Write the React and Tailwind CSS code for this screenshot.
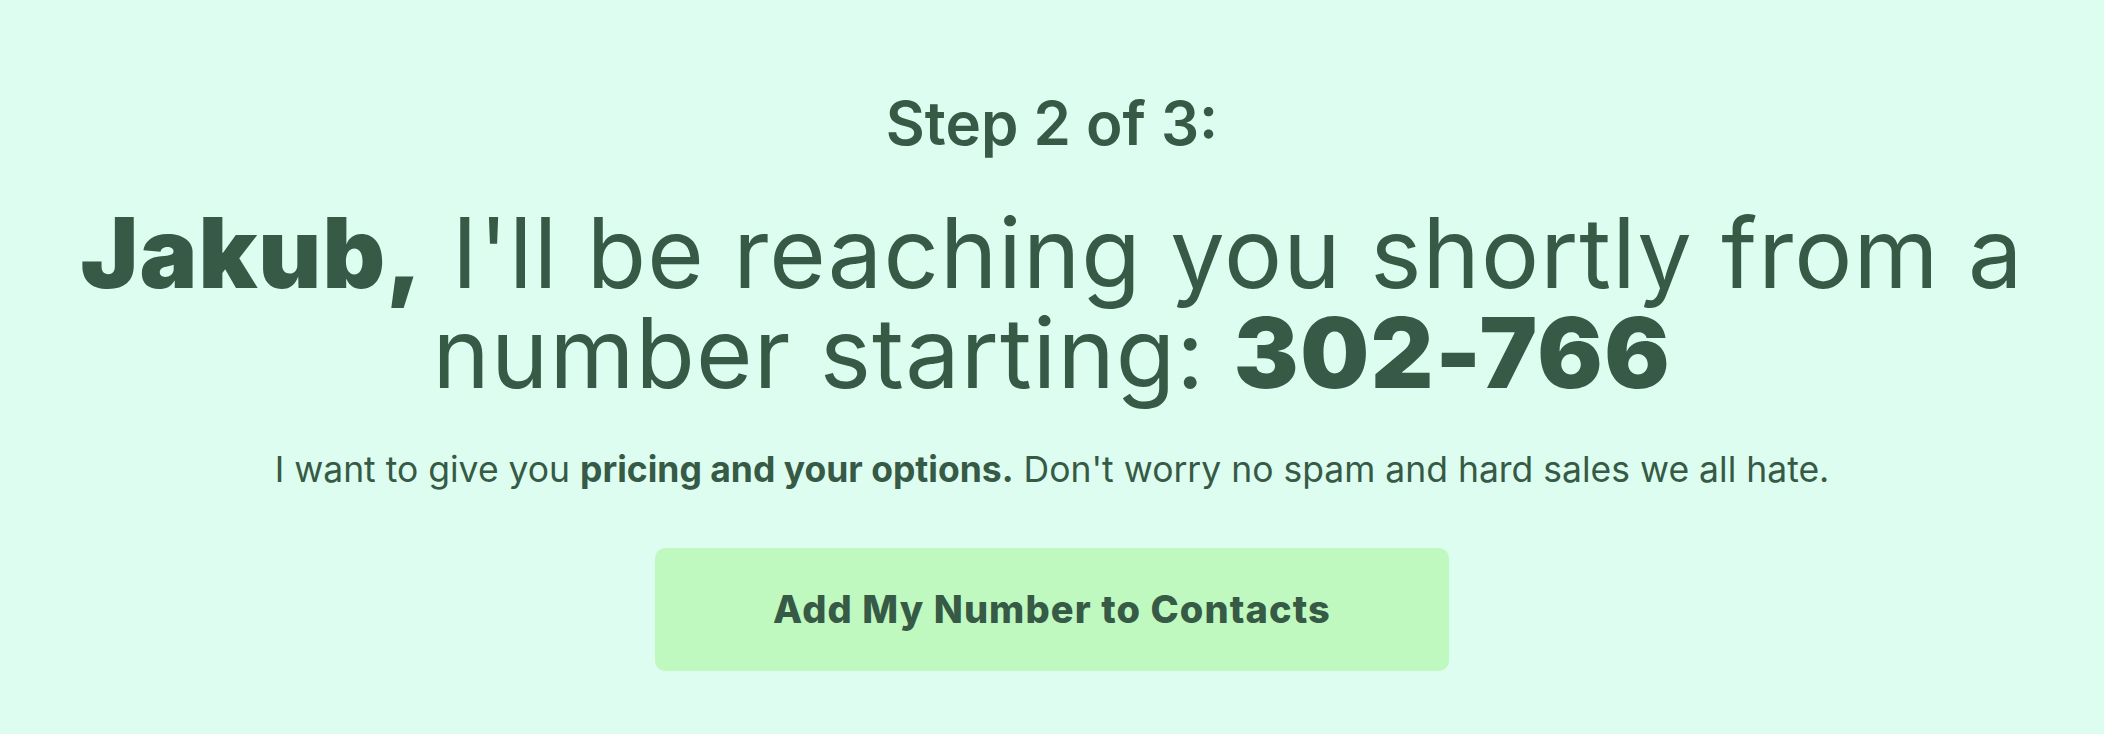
export default function App() {
  return (
    <div className="min-h-[734px] w-full bg-[#dcfdef] font-['Inter',sans-serif] text-[#365a45]">
      <div className="flex flex-col items-center px-[40px] pt-[93px] text-center">
        <p className="text-[60px] font-semibold leading-[60px]">Step 2 of 3:</p>
        <h1 className="mt-[50px] text-[97px] font-normal leading-[100px] tracking-[1.1px]">
          <span className="font-black">Jakub,</span> I'll be reaching you shortly from a
          <br />
          number starting: <span className="font-black tracking-[1.6px]">302-766</span>
        </h1>
        <p className="mt-[40px] text-[35.5px] leading-[54px]">
          I want to give you <span className="font-bold">pricing and your options.</span> Don't worry no spam and hard sales we all hate.
        </p>
        <button className="mt-[51px] flex h-[123px] w-[794px] items-center justify-center rounded-[10px] bg-[#bff9c0] text-[38px] font-extrabold tracking-[1.1px] text-[#365a45]">
          Add My Number to Contacts
        </button>
      </div>
    </div>
  );
}
